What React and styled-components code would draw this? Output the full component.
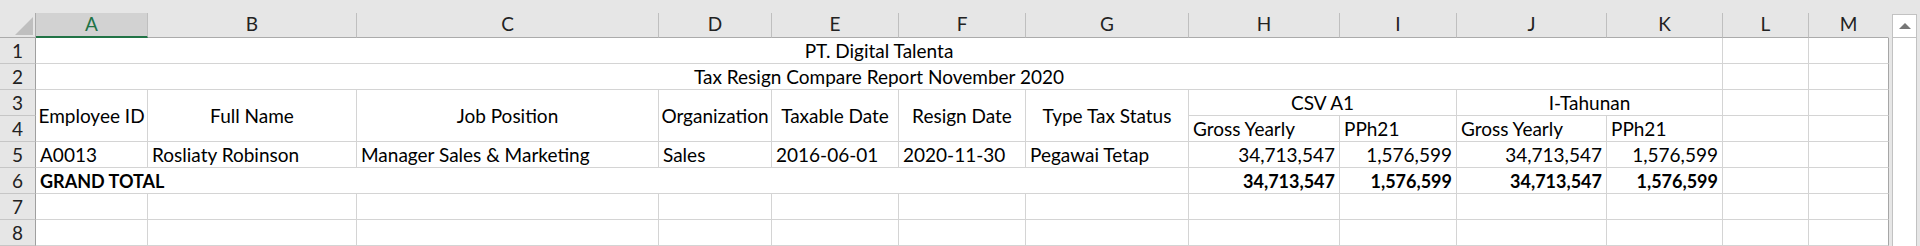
import styled, { createGlobalStyle } from "styled-components"

const GlobalStyle = createGlobalStyle`
    html, body {
        margin: 0;
        padding: 0;
        background: #e6e6e6;
        overflow: hidden;
    }
    body {
        font-family: Lato, "Liberation Sans", sans-serif;
        font-size: 19px;
        color: #000;
    }
`

const LETTERS = ["A", "B", "C", "D", "E", "F", "G", "H", "I", "J", "K", "L", "M"]
const WIDTHS = [112, 209, 302, 113, 127, 127, 163, 151, 117, 150, 116, 86, 80]
const ROW_COUNT = 8

// filled and merged cells of the sheet, r/c are 1-based
const CELLS = [
    { r: 1, c: 1, cs: 11, text: "PT. Digital Talenta", align: "center" },
    { r: 2, c: 1, cs: 11, text: "Tax Resign Compare Report November 2020", align: "center" },
    { r: 3, c: 1, rs: 2, text: "Employee ID", align: "center", mid: true },
    { r: 3, c: 2, rs: 2, text: "Full Name", align: "center", mid: true },
    { r: 3, c: 3, rs: 2, text: "Job Position", align: "center", mid: true },
    { r: 3, c: 4, rs: 2, text: "Organization", align: "center", mid: true },
    { r: 3, c: 5, rs: 2, text: "Taxable Date", align: "center", mid: true },
    { r: 3, c: 6, rs: 2, text: "Resign Date", align: "center", mid: true },
    { r: 3, c: 7, rs: 2, text: "Type Tax Status", align: "center", mid: true },
    { r: 3, c: 8, cs: 2, text: "CSV A1", align: "center" },
    { r: 3, c: 10, cs: 2, text: "I-Tahunan", align: "center" },
    { r: 4, c: 8, text: "Gross Yearly" },
    { r: 4, c: 9, text: "PPh21" },
    { r: 4, c: 10, text: "Gross Yearly" },
    { r: 4, c: 11, text: "PPh21" },
    { r: 5, c: 1, text: "A0013" },
    { r: 5, c: 2, text: "Rosliaty Robinson" },
    { r: 5, c: 3, text: "Manager Sales & Marketing" },
    { r: 5, c: 4, text: "Sales" },
    { r: 5, c: 5, text: "2016-06-01" },
    { r: 5, c: 6, text: "2020-11-30" },
    { r: 5, c: 7, text: "Pegawai Tetap" },
    { r: 5, c: 8, text: "34,713,547", align: "right" },
    { r: 5, c: 9, text: "1,576,599", align: "right" },
    { r: 5, c: 10, text: "34,713,547", align: "right" },
    { r: 5, c: 11, text: "1,576,599", align: "right" },
    { r: 6, c: 1, cs: 7, text: "GRAND TOTAL", bold: true },
    { r: 6, c: 8, text: "34,713,547", align: "right", bold: true },
    { r: 6, c: 9, text: "1,576,599", align: "right", bold: true },
    { r: 6, c: 10, text: "34,713,547", align: "right", bold: true },
    { r: 6, c: 11, text: "1,576,599", align: "right", bold: true },
]

// every grid slot not covered by a filled or merged cell gets an empty one
function buildCells() {
    const taken = new Set()
    CELLS.forEach(({ r, c, rs = 1, cs = 1 }) => {
        for (let i = 0; i < rs; i++)
            for (let j = 0; j < cs; j++) taken.add(`${r + i}-${c + j}`)
    })
    const empty = []
    for (let r = 1; r <= ROW_COUNT; r++)
        for (let c = 1; c <= LETTERS.length; c++)
            if (!taken.has(`${r}-${c}`)) empty.push({ r, c, text: "" })
    return [...CELLS, ...empty]
}

const justify = { left: "flex-start", center: "center", right: "flex-end" }

const Window = styled.div`
    width: 1920px;
    height: 246px;
    display: flex;
    flex-direction: column;
    background: #e6e6e6;
    overflow: hidden;
`
const TopStrip = styled.div`
    height: 13px;
    flex-shrink: 0;
`
const Body = styled.div`
    flex: 1;
    display: flex;
`
const Sheet = styled.div`
    display: grid;
    grid-template-columns: 36px ${WIDTHS.map((w) => `${w}px`).join(" ")};
    grid-template-rows: 25px repeat(${ROW_COUNT}, 26px);
    align-content: start;
`
const Corner = styled.div`
    grid-row: 1;
    grid-column: 1;
    display: flex;
    justify-content: flex-end;
    align-items: flex-end;
    padding: 0 2px 2px 0;
    border-right: 1px solid #ababab;
    border-bottom: 1px solid #ababab;
`
const Triangle = styled.div`
    width: 0;
    height: 0;
    border-left: 18px solid transparent;
    border-bottom: 18px solid #bfbfbf;
`
const ColHead = styled.div`
    grid-row: 1;
    grid-column: ${(p) => p.$c + 1};
    display: flex;
    justify-content: center;
    align-items: flex-end;
    padding-bottom: ${(p) => (p.$active ? "2px" : "3px")};
    background: ${(p) => (p.$active ? "#d2d2d2" : "#e6e6e6")};
    color: ${(p) => (p.$active ? "#217346" : "#222")};
    border-right: 1px solid ${(p) => (p.$last ? "transparent" : "#bfbfbf")};
    border-bottom: ${(p) => (p.$active ? "2px solid #217346" : "1px solid #ababab")};
    line-height: 20px;
`
const RowHead = styled.div`
    grid-row: ${(p) => p.$r + 1};
    grid-column: 1;
    display: flex;
    justify-content: center;
    align-items: flex-end;
    padding-bottom: 1px;
    color: #222;
    border-right: 1px solid #9f9f9f;
    border-bottom: 1px solid #c6c6c6;
    line-height: 22px;
`
const Cell = styled.div`
    grid-row: ${(p) => p.$r + 1} / span ${(p) => p.$rs || 1};
    grid-column: ${(p) => p.$c + 1} / span ${(p) => p.$cs || 1};
    display: flex;
    justify-content: ${(p) => justify[p.$align || "left"]};
    align-items: ${(p) => (p.$mid ? "center" : "flex-end")};
    padding: ${(p) => (p.$mid ? "0 4px" : "0 4px 1px")};
    background: #fff;
    border-right: 1px solid ${(p) => (p.$c === LETTERS.length ? "#a6a6a6" : "#d4d4d4")};
    border-bottom: 1px solid #d4d4d4;
    font-weight: ${(p) => (p.$bold ? 700 : 400)};
    font-size: ${(p) => (p.$bold ? "18px" : "19px")};
    line-height: 22px;
    white-space: nowrap;
    overflow: hidden;
`
const ScrollArea = styled.div`
    width: 31px;
    display: flex;
    flex-direction: column;
    padding-top: 1px;
`
const UpButton = styled.div`
    box-sizing: border-box;
    width: 25px;
    height: 24px;
    margin-left: 3px;
    background: #fff;
    border: 1px solid #c2c2c2;
    display: flex;
    justify-content: center;
    align-items: center;
`
const Arrow = styled.div`
    width: 0;
    height: 0;
    border-left: 6px solid transparent;
    border-right: 6px solid transparent;
    border-bottom: 6px solid #777;
    margin-top: -1px;
`
const Track = styled.div`
    flex: 1;
    padding-left: 3px;
    display: flex;
`
const TrackInner = styled.div`
    box-sizing: border-box;
    width: 25px;
    background: #fff;
    border-left: 1px solid #c2c2c2;
    border-right: 1px solid #c2c2c2;
`

function App() {
    return (
        <>
            <GlobalStyle />
            <Window>
                <TopStrip />
                <Body>
                    <Sheet>
                        <Corner><Triangle /></Corner>
                        {LETTERS.map((l, i) => (
                            <ColHead key={l} $c={i + 1} $active={i === 0} $last={i === LETTERS.length - 1}>
                                {l}
                            </ColHead>
                        ))}
                        {Array.from({ length: ROW_COUNT }, (_, i) => (
                            <RowHead key={i} $r={i + 1}>{i + 1}</RowHead>
                        ))}
                        {buildCells().map((cell) => (
                            <Cell
                                key={`${cell.r}-${cell.c}`}
                                $r={cell.r}
                                $c={cell.c}
                                $rs={cell.rs}
                                $cs={cell.cs}
                                $align={cell.align}
                                $mid={cell.mid}
                                $bold={cell.bold}
                            >
                                {cell.text}
                            </Cell>
                        ))}
                    </Sheet>
                    <ScrollArea>
                        <UpButton><Arrow /></UpButton>
                        <Track><TrackInner /></Track>
                    </ScrollArea>
                </Body>
            </Window>
        </>
    )
}

export default App
